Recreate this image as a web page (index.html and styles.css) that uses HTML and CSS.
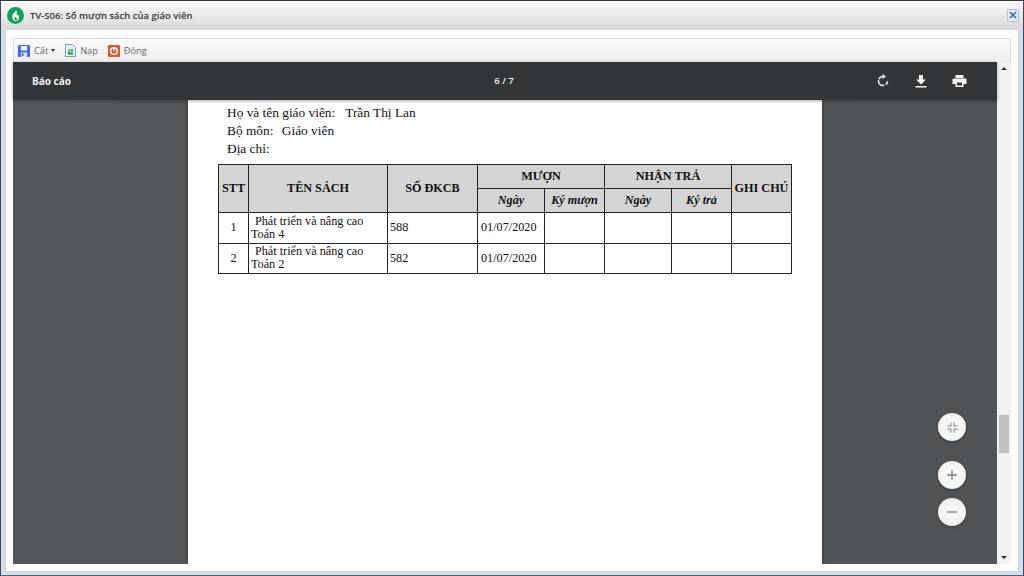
FILE: index.html
```html
<!DOCTYPE html>
<html lang="vi">
<head>
<meta charset="utf-8">
<title>TV-S06</title>
<link rel="stylesheet" href="styles.css">
</head>
<body>
<div class="window">
  <header class="titlebar">
    <svg class="logo" width="17" height="17" viewBox="0 0 17 17"><circle cx="8.5" cy="8.5" r="8.5" fill="#12a05c"/><path d="M8.8 2.6c.6 2.2-3.6 4.2-3.6 7.4 0 2.3 1.6 4 3.4 4 2 0 3.4-1.6 3.4-3.6 0-1.6-.8-2.6-1.4-3.4.1 1.2-.3 1.8-.9 2.2C10 7 10.200 4.400 8.800 2.600z" fill="#fff"/><path d="M8.600 9.500c-.2 1-1.200 1.400-1.200 2.500 0 .8.600 1.300 1.300 1.300s1.300-.6 1.300-1.300c0-1-.9-1.500-1.400-2.500z" fill="#12a05c"/></svg>
    <span class="title">TV-S06: Sổ mượn sách của giáo viên</span>
    <button class="close" aria-label="Đóng"><svg width="8" height="8" viewBox="0 0 8 8"><path d="M1 1l6 6M7 1L1 7" stroke="#3a6ea8" stroke-width="1.700"/></svg></button>
  </header>
  <div class="client">
    <nav class="toolbar">
      <span class="tool">
        <svg width="12" height="12" viewBox="0 0 13 13"><rect width="13" height="13" rx="1" fill="#3f62e0"/><rect x="3" y="1" width="7" height="5" fill="#eef2ff"/><rect x="3" y="8" width="7" height="5" fill="#dfe6f5"/><rect x="4" y="9" width="2" height="3" fill="#3f62e0"/></svg>
        Cất<i class="caret"></i>
      </span>
      <span class="tool">
        <svg width="11" height="13" viewBox="0 0 11 13"><path d="M.5.500h7l3 3v9H.500z" fill="#e8f0fa" stroke="#7d9cc4"/><path d="M3 5.500h5v2H5v1h3v2H3v-3h3v-1H3z" fill="#1a9e2c"/></svg>
        Nạp
      </span>
      <span class="tool">
        <svg width="12" height="12" viewBox="0 0 12 12"><rect width="12" height="12" rx="1" fill="#e2562c"/><circle cx="6" cy="6" r="3.300" fill="none" stroke="#fff" stroke-width="1.500"/><rect x="5.300" y="2" width="1.400" height="4" fill="#fff"/></svg>
        Đóng
      </span>
    </nav>
    <div class="viewer-row">
      <main class="viewer">
        <div class="viewer-bar">
          <span class="doc-name">Báo cáo</span>
          <span class="pages">6 / 7</span>
          <div class="viewer-actions">
            <svg width="14" height="14" viewBox="0 0 14 14" fill="none"><path d="M7 2.500A4.500 4.500 0 1 0 11.500 7" stroke="#f1f1f1" stroke-width="1.600" stroke-dasharray="5 1 9 1.500 4 1"/><path d="M6.500 0v5L10 2.500z" fill="#f1f1f1"/></svg>
            <svg width="12" height="14" viewBox="0 0 12 14"><path d="M4 1h4v4.500h3L6 10.500 1 5.500h3zM.500 12h11v1.500H.500z" fill="#f1f1f1"/></svg>
            <svg width="15" height="14" viewBox="0 0 15 14"><path d="M3.500 1h8v3h-8zM1.500 4.500h12a1 1 0 0 1 1 1V10h-3v3h-8v-3h-3V5.500a1 1 0 0 1 1-1zM5 8.500V11.500h5V8.500z" fill="#f1f1f1" fill-rule="evenodd"/></svg>
          </div>
        </div>
        <div class="canvas">
          <article class="paper">
            <p class="line name">Họ và tên giáo viên:<span class="value wide">Trần Thị Lan</span></p>
            <p class="line">Bộ môn:<span class="value">Giáo viên</span></p>
            <p class="line">Địa chỉ:</p>
            <table class="ledger">
              <colgroup>
                <col class="c1"><col class="c2"><col class="c3"><col class="c4"><col class="c5"><col class="c6"><col class="c7"><col class="c8">
              </colgroup>
              <thead>
                <tr class="h1">
                  <th rowspan="2">STT</th><th rowspan="2">TÊN SÁCH</th><th rowspan="2">SỐ ĐKCB</th>
                  <th colspan="2">MƯỢN</th><th colspan="2">NHẬN TRẢ</th><th rowspan="2">GHI CHÚ</th>
                </tr>
                <tr class="h2"><th>Ngày</th><th>Ký mượn</th><th>Ngày</th><th>Ký trả</th></tr>
              </thead>
              <tbody>
                <tr><td class="ctr">1</td><td><span class="indent">Phát triển và nâng cao</span><br>Toán 4</td><td>588</td><td class="date">01/07/2020</td><td></td><td></td><td></td><td></td></tr>
                <tr><td class="ctr">2</td><td><span class="indent">Phát triển và nâng cao</span><br>Toán 2</td><td>582</td><td class="date">01/07/2020</td><td></td><td></td><td></td><td></td></tr>
              </tbody>
            </table>
          </article>
          <div class="fabs">
            <button class="fab fit" aria-label="Thu nhỏ"><svg width="11" height="11" viewBox="0 0 12 12"><path d="M4.200.500v3.700H.500M7.800.500v3.700h3.700M11.500 7.800H7.800v3.700M4.200 11.500V7.800H.500" fill="none" stroke="#999" stroke-width="1.400"/></svg></button>
            <button class="fab" aria-label="Phóng to"><svg width="10" height="10" viewBox="0 0 10 10"><path d="M5 0v10M0 5h10" stroke="#808080" stroke-width="1.300"/></svg></button>
            <button class="fab" aria-label="Thu nhỏ"><svg width="10" height="10" viewBox="0 0 10 10"><path d="M0 5h10" stroke="#808080" stroke-width="1.300"/></svg></button>
          </div>
        </div>
      </main>
      <aside class="scrollbar">
        <i class="arrow up"></i>
        <div class="track"><div class="thumb"></div></div>
        <i class="arrow down"></i>
      </aside>
    </div>
  </div>
</div>
</body>
</html>
```

FILE: styles.css
```css
* { box-sizing: border-box; }
html, body { margin: 0; height: 100%; overflow: hidden; }
body { font-family: "Open Sans", "Noto Sans", sans-serif; background: #fff; }
.window {
  width: 1024px; height: 576px; display: flex; flex-direction: column;
  border: 1px solid #3c4654; border-bottom-color: #55606e; border-top-color: #2f3640;
  background: #d5dfea;
}
.titlebar {
  height: 28px; flex: none; display: flex; align-items: center; padding: 0 4px 0 6px;
  background: linear-gradient(#fafafa, #d9d9d9);
}
.logo { flex: none; }
.title { margin-left: 6px; font-size: 9.500px; font-weight: 600; color: #333; }
.close {
  margin-left: auto; width: 12px; height: 13px; padding: 0; border: 1px solid #a9c0e0; border-radius: 2px;
  background: #e6eefa; display: flex; align-items: center; justify-content: center;
}
.client {
  flex: 1; min-height: 0; margin: 0 4px 3px 4px; padding: 8px 7px 7px 7px; background: #fff;
  display: flex; flex-direction: column; border: 1px solid #c9d4e0;
}
.toolbar {
  height: 24px; flex: none; display: flex; align-items: center; gap: 10px; padding: 0 4px;
  background: linear-gradient(#fbfbfb, #ececec); border: 1px solid #dcdcdc; border-bottom: 0;
}
.tool { display: flex; align-items: center; gap: 4px; font-size: 9.200px; color: #666; }
.caret {
  width: 0; height: 0; margin-left: -1px; border: 2.500px solid transparent; border-top: 3px solid #333; border-bottom: 0;
}
.viewer-row { flex: 1; min-height: 0; display: flex; }
.viewer { flex: 1; min-width: 0; display: flex; flex-direction: column; background: #525659; }
.viewer-bar {
  height: 38px; flex: none; display: grid; grid-template-columns: 1fr auto 1fr; align-items: center;
  padding: 0 30px 0 19px; background: #323639; color: #f1f1f1; box-shadow: 0 1px 3px rgba(0,0,0,.35);
  position: relative; z-index: 1;
}
.doc-name { font-size: 10px; font-weight: 700; }
.pages { font-size: 9.500px; font-weight: 600; margin-left: 9px; margin-bottom: 2px; }
.viewer-actions { justify-self: end; display: flex; align-items: center; gap: 25px; }
.canvas {
  flex: 1; min-height: 0; position: relative; display: flex; justify-content: center; overflow: hidden;
  background: linear-gradient(90deg, #54585b, #505457);
}
.paper {
  width: 634px; background: #fff; padding: 4px 0 0 30px; box-shadow: 0 0 4px rgba(0,0,0,.45);
  font-family: "Liberation Serif", "Times New Roman", serif; color: #111;
}
.line { margin: 0 0 0 9px; font-size: 13.350px; line-height: 18px; height: 18px; }
.value { margin-left: 8.500px; }
.value.wide { margin-left: 10px; }
.ledger {
  margin-top: 6px; table-layout: fixed; width: 573px; border-collapse: collapse; font-size: 12.200px;
  border: 1px solid #222;
}
.c1 { width: 30px; } .c2 { width: 139px; } .c3 { width: 90px; } .c4 { width: 67px; }
.c5 { width: 60px; } .c6 { width: 67px; } .c7 { width: 60px; } .c8 { width: 60px; }
.ledger th, .ledger td { border: 1px solid #222; padding: 0 2px; }
.ledger th { background: #d4d4d4; font-weight: 700; text-align: center; font-size: 12.200px; white-space: nowrap; }
.h1 { height: 24px; } .h2 { height: 24px; }
.h2 th { font-style: italic; }
.ledger td { height: 30.500px; line-height: 13px; font-size: 12.200px; }
.ledger td.ctr { text-align: center; }
.ledger td.date { padding-left: 3px; }
.indent { margin-left: 4px; }
.fabs {
  position: absolute; right: 31px; top: 313px; display: flex; flex-direction: column; gap: 9px;
}
.fab {
  width: 28px; height: 28px; border: 0; padding: 0; border-radius: 50%; background: #f4f4f4;
  display: flex; align-items: center; justify-content: center; box-shadow: 0 1px 3px rgba(0,0,0,.4);
}
.fab.fit { margin-bottom: 11px; }
.scrollbar { width: 14px; flex: none; display: flex; flex-direction: column; align-items: center; background: #f1f1f1; }
.arrow { width: 0; height: 0; border: 3px solid transparent; margin: 5px 0; flex: none; }
.arrow.up { border-bottom: 3px solid #333; border-top: 0; }
.arrow.down { border-top: 3px solid #333; border-bottom: 0; }
.track { flex: 1; width: 100%; padding-top: 340px; }
.thumb { height: 38px; background: #c1c1c1; margin: 0 2px; }
```
